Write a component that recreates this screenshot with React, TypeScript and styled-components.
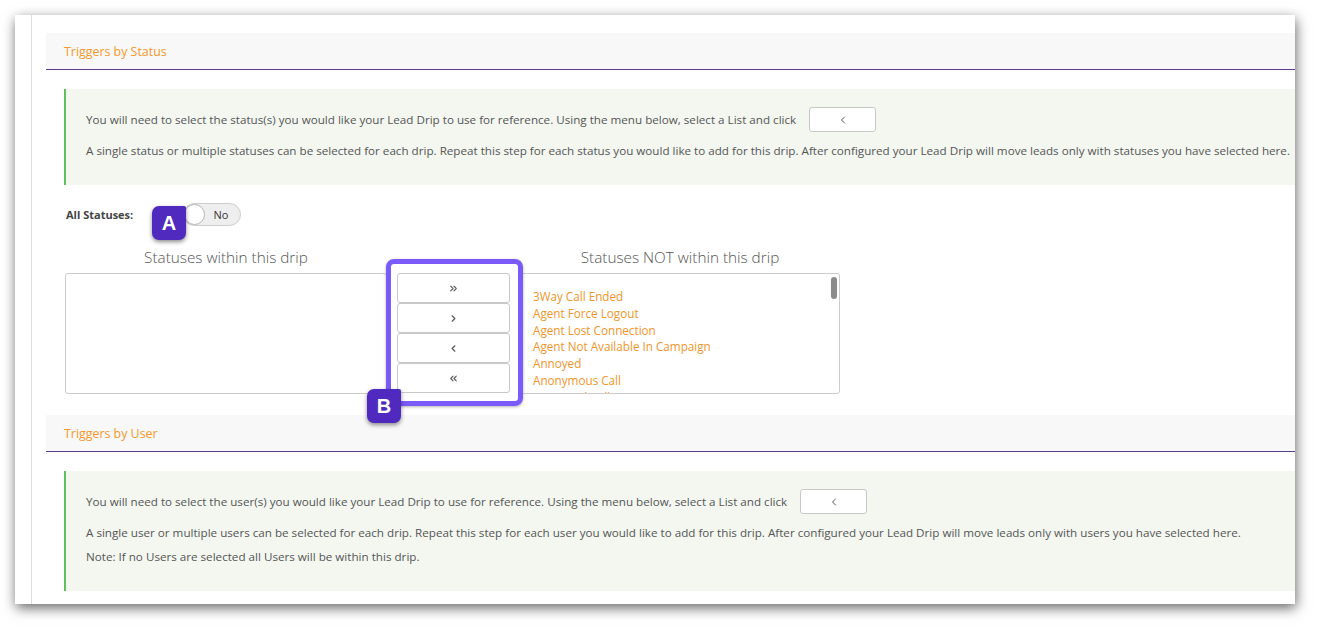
import React from "react";
import styled, { createGlobalStyle } from "styled-components";
import {
  ChevronLeft,
  ChevronRight,
  ChevronsLeft,
  ChevronsRight,
} from "lucide-react";

const GlobalStyle = createGlobalStyle`
  html, body {
    margin: 0;
    background: #fff;
  }
  body {
    font-family: "Open Sans", "Noto Sans", sans-serif;
    color: #555;
  }
`;

const Stage = styled.div`
  width: 1320px;
  height: 629px;
  box-sizing: border-box;
  padding: 15px 25px 25px 15px;
  overflow: hidden;
`;

const Window = styled.div`
  width: 1280px;
  height: 589px;
  background: #fff;
  box-shadow: 1px 4px 12px rgba(0, 0, 0, 0.6);
  display: flex;
  overflow: hidden;
`;

const Gutter = styled.div`
  flex: 0 0 16px;
  border-right: 1px solid #dcdcdc;
`;

const Content = styled.div`
  flex: 0 0 1300px;
  padding: 18px 0 0 14px;
`;

const SectionHeader = styled.div<{ $gap?: number }>`
  height: 37px;
  box-sizing: border-box;
  margin-top: ${(p) => p.$gap ?? 0}px;
  background: #f8f8f8;
  border-bottom: 1px solid #5a3b8c;
  padding-left: 18px;
  display: flex;
  align-items: center;
  color: #f5972a;
  font-size: 12.4px;
`;

const Note = styled.div`
  margin: 19px 0 0 18px;
  background: #f3f7f0;
  border-left: 2px solid #63c060;
  padding: 18px 20px 26px;
  font-size: 11.65px;
  color: #555;
`;

const NoteRow = styled.div`
  display: flex;
  align-items: center;
  gap: 13px;
  height: 25px;
  white-space: nowrap;
`;

const NoteText = styled.p<{ $top?: number }>`
  margin: ${(p) => p.$top ?? 10}px 0 0;
  line-height: 17px;
  white-space: nowrap;
`;

const InlineButton = styled.button`
  flex: 0 0 67px;
  height: 25px;
  padding: 0;
  background: #fff;
  border: 1px solid #c8c8c8;
  border-radius: 3px;
  display: flex;
  align-items: center;
  justify-content: center;
  color: #555;
`;

const ToggleRow = styled.div`
  position: relative;
  display: flex;
  align-items: center;
  height: 23px;
  margin: 18px 0 0 20px;
`;

const ToggleLabel = styled.span`
  width: 117px;
  font-size: 11px;
  font-weight: 700;
  color: #444;
`;

const Toggle = styled.div`
  width: 58px;
  height: 23px;
  box-sizing: border-box;
  border: 1px solid #ccc;
  border-radius: 12px;
  background: #eee;
  display: flex;
  align-items: center;
`;

const Knob = styled.span`
  width: 21px;
  height: 21px;
  box-sizing: border-box;
  border-radius: 50%;
  background: #fff;
  border: 1px solid #b5b5b5;
`;

const ToggleText = styled.span`
  flex: 1;
  text-align: center;
  font-size: 11px;
  color: #333;
  padding-right: 3px;
`;

const Badge = styled.div`
  position: absolute;
  width: 34px;
  height: 34px;
  background: #5029bf;
  color: #fff;
  border-radius: 7px 2px 7px 7px;
  box-shadow: 0 2px 4px rgba(0, 0, 0, 0.45);
  display: flex;
  align-items: center;
  justify-content: center;
  font-family: "Liberation Sans", Arial, sans-serif;
  font-weight: 700;
  font-size: 20px;
  z-index: 3;
`;

const BadgeA = styled(Badge)`
  left: 86px;
  top: 3px;
`;

const BadgeB = styled(Badge)`
  left: 302px;
  top: 142px;
`;

const Transfer = styled.div`
  position: relative;
  width: max-content;
  margin: 21px 0 0 19px;
  display: grid;
  grid-template-columns: 322px 113px 320px;
  grid-template-rows: 20px 121px;
  column-gap: 10px;
  row-gap: 6px;
`;

const ColumnTitle = styled.div`
  text-align: center;
  font-size: 15.3px;
  font-weight: 300;
  line-height: 20px;
  color: #555;
`;

const ListFrame = styled.div`
  position: relative;
  box-sizing: border-box;
  height: 121px;
  border: 1px solid #ccc;
  border-radius: 3px;
  background: #fff;
  overflow: hidden;
`;

const ListScroll = styled.div`
  height: 100%;
  overflow: hidden;
  padding: 14px 0 0 12px;
  box-sizing: border-box;
`;

const ScrollThumb = styled.div`
  position: absolute;
  top: 3px;
  right: 2px;
  width: 6px;
  height: 22px;
  border-radius: 3px;
  background: #8c8c8c;
`;

const StatusItem = styled.div`
  font-size: 11.7px;
  line-height: 16.8px;
  color: #f0952a;
  white-space: nowrap;
`;

const ButtonStack = styled.div`
  display: flex;
  flex-direction: column;
`;

const MoveButton = styled.button`
  height: 30px;
  padding: 0;
  background: #fff;
  border: 1px solid #c8c8c8;
  border-radius: 3px;
  display: flex;
  align-items: center;
  justify-content: center;
  color: #555;
`;

const Highlight = styled.div`
  position: absolute;
  left: 321px;
  top: 12px;
  width: 137px;
  height: 147px;
  box-sizing: border-box;
  border: 5px solid #7a5af8;
  border-radius: 8px;
  box-shadow: 0 1px 3px rgba(0, 0, 0, 0.3);
  pointer-events: none;
  z-index: 2;
`;

const statuses = [
  "3Way Call Ended",
  "Agent Force Logout",
  "Agent Lost Connection",
  "Agent Not Available In Campaign",
  "Annoyed",
  "Anonymous Call",
  "Answered Call",
  "Answering Machine",
  "Appointment Set",
  "Bad Number",
];

const App = () => (
  <Stage>
    <GlobalStyle />
    <Window>
      <Gutter />
      <Content>
        <SectionHeader>Triggers by Status</SectionHeader>
        <Note>
          <NoteRow>
            You will need to select the status(s) you would like your Lead Drip
            to use for reference. Using the menu below, select a List and click
            <InlineButton>
              <ChevronLeft size={12} strokeWidth={2} />
            </InlineButton>
          </NoteRow>
          <NoteText>
            A single status or multiple statuses can be selected for each drip.
            Repeat this step for each status you would like to add for this
            drip. After configured your Lead Drip will move leads only with
            statuses you have selected here.
          </NoteText>
        </Note>

        <ToggleRow>
          <ToggleLabel>All Statuses:</ToggleLabel>
          <Toggle>
            <Knob />
            <ToggleText>No</ToggleText>
          </Toggle>
          <BadgeA>A</BadgeA>
        </ToggleRow>

        <Transfer>
          <ColumnTitle>Statuses within this drip</ColumnTitle>
          <div />
          <ColumnTitle>Statuses NOT within this drip</ColumnTitle>

          <ListFrame />
          <ButtonStack>
            <MoveButton>
              <ChevronsRight size={11} strokeWidth={2.4} />
            </MoveButton>
            <MoveButton>
              <ChevronRight size={11} strokeWidth={2.4} />
            </MoveButton>
            <MoveButton>
              <ChevronLeft size={11} strokeWidth={2.4} />
            </MoveButton>
            <MoveButton>
              <ChevronsLeft size={11} strokeWidth={2.4} />
            </MoveButton>
          </ButtonStack>
          <ListFrame>
            <ListScroll>
              {statuses.map((s) => (
                <StatusItem key={s}>{s}</StatusItem>
              ))}
            </ListScroll>
            <ScrollThumb />
          </ListFrame>

          <Highlight />
          <BadgeB>B</BadgeB>
        </Transfer>

        <SectionHeader $gap={21}>Triggers by User</SectionHeader>
        <Note>
          <NoteRow>
            You will need to select the user(s) you would like your Lead Drip to
            use for reference. Using the menu below, select a List and click
            <InlineButton>
              <ChevronLeft size={12} strokeWidth={2} />
            </InlineButton>
          </NoteRow>
          <NoteText>
            A single user or multiple users can be selected for each drip.
            Repeat this step for each user you would like to add for this drip.
            After configured your Lead Drip will move leads only with users you
            have selected here.
          </NoteText>
          <NoteText $top={7}>
            Note: If no Users are selected all Users will be within this drip.
          </NoteText>
        </Note>
      </Content>
    </Window>
  </Stage>
);

export default App;
